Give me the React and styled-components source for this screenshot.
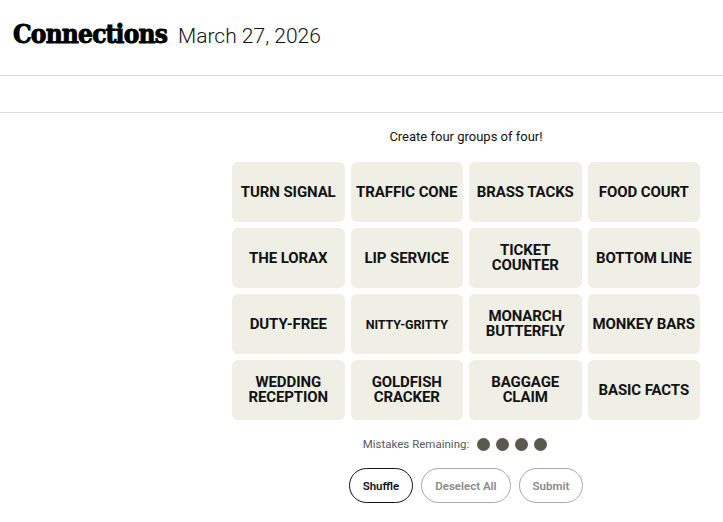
import React from "react";
import styled, { createGlobalStyle } from "styled-components";

const Global = createGlobalStyle`
  html, body { margin: 0; padding: 0; background: #fff; }
  body { font-family: "Liberation Sans", Arial, sans-serif; color: #121212; }
`;

const Header = styled.header`
  height: 76px;
  border-bottom: 1px solid #dcdcdc;
  display: flex;
  align-items: center;
  gap: 11px;
  padding: 0 0 8px 13px;
  box-sizing: border-box;
`;

const Title = styled.h1`
  margin: 0;
  font-family: "DejaVu Serif Condensed", "DejaVu Serif", serif;
  font-weight: 900;
  font-size: 26px;
  letter-spacing: -0.8px;
  color: #000;
  -webkit-text-stroke: 0.9px #000;
`;

const DateText = styled.span`
  font-family: Roboto, "Liberation Sans", sans-serif;
  font-size: 21px;
  font-weight: 300;
  color: #121212;
  padding-top: 4px;
`;

const Toolbar = styled.div`
  height: 36px;
  border-bottom: 1px solid #dcdcdc;
`;

const Main = styled.main`
  width: 468px;
  margin: 0 23px 0 auto;
  display: flex;
  flex-direction: column;
  align-items: center;
`;

const Prompt = styled.p`
  margin: 16px 0 0;
  font-family: Roboto, "Liberation Sans", sans-serif;
  font-size: 13px;
  line-height: 16px;
  color: #121212;
`;

const Grid = styled.div`
  margin-top: 17px;
  display: grid;
  grid-template-columns: repeat(4, 1fr);
  gap: 6px;
  width: 100%;
`;

const Tile = styled.button`
  height: 60px;
  border: none;
  border-radius: 6px;
  background: #efefe6;
  font-family: Roboto, "Liberation Sans", sans-serif;
  font-weight: 700;
  font-size: ${(p) => (p.$small ? "12.5px" : "15px")};
  line-height: 15px;
  text-transform: uppercase;
  color: #121212;
  padding: 0 4px;
  display: flex;
  align-items: center;
  justify-content: center;
  text-align: center;
  letter-spacing: -0.1px;
`;

const MistakesRow = styled.div`
  margin-top: 17px;
  display: flex;
  align-items: center;
  gap: 8px;
  margin-right: 22px;
  font-family: Roboto, "Liberation Sans", sans-serif;
  font-size: 11.5px;
  color: #5a5a5a;
`;

const Dots = styled.div`
  display: flex;
  gap: 6px;
`;

const Dot = styled.span`
  width: 13px;
  height: 13px;
  border-radius: 50%;
  background: #5a594e;
`;

const Buttons = styled.div`
  margin-top: 17px;
  display: flex;
  gap: 8px;
`;

const Btn = styled.button`
  height: 35px;
  padding: 0 13px;
  border-radius: 18px;
  background: #fff;
  border: 1px solid ${(p) => (p.$disabled ? "#a8a8a8" : "#121212")};
  color: ${(p) => (p.$disabled ? "#8a8a8a" : "#121212")};
  font-family: Roboto, "Liberation Sans", sans-serif;
  font-weight: 600;
  font-size: 11.5px;
`;

const words = [
  ["TURN SIGNAL"], ["TRAFFIC CONE"], ["BRASS TACKS"], ["FOOD COURT"],
  ["THE LORAX"], ["LIP SERVICE"], ["TICKET", "COUNTER"], ["BOTTOM LINE"],
  ["DUTY-FREE"], ["NITTY-GRITTY", null, true], ["MONARCH", "BUTTERFLY"], ["MONKEY BARS"],
  ["WEDDING", "RECEPTION"], ["GOLDFISH", "CRACKER"], ["BAGGAGE", "CLAIM"], ["BASIC FACTS"],
];

export default function App() {
  return (
    <>
      <Global />
      <Header>
        <Title>Connections</Title>
        <DateText>March 27, 2026</DateText>
      </Header>
      <Toolbar />
      <Main>
        <Prompt>Create four groups of four!</Prompt>
        <Grid>
          {words.map(([a, b, small], i) => (
            <Tile key={i} $small={small}>
              <span>
                {a}
                {b && <><br />{b}</>}
              </span>
            </Tile>
          ))}
        </Grid>
        <MistakesRow>
          <span>Mistakes Remaining:</span>
          <Dots>
            <Dot /><Dot /><Dot /><Dot />
          </Dots>
        </MistakesRow>
        <Buttons>
          <Btn>Shuffle</Btn>
          <Btn $disabled>Deselect All</Btn>
          <Btn $disabled>Submit</Btn>
        </Buttons>
      </Main>
    </>
  );
}
